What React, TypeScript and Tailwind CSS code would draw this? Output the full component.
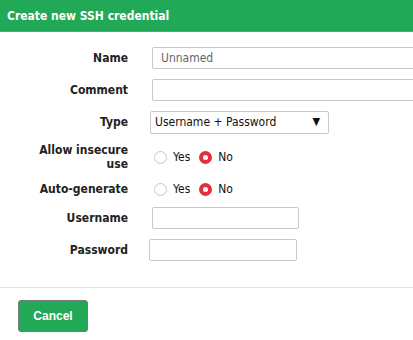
import React from 'react';

const font = { fontFamily: '"DejaVu Sans Condensed", "DejaVu Sans", Tahoma, sans-serif' };

interface RowProps {
  label: React.ReactNode;
  height: string;
  children: React.ReactNode;
}

const Row: React.FC<RowProps> = ({ label, height, children }) => (
  <div className={`flex items-center ${height}`}>
    <div className="w-[128px] shrink-0 text-right text-[12px] font-bold leading-[14px] text-[#222]">{label}</div>
    <div className="flex items-center">{children}</div>
  </div>
);

const Radio: React.FC<{ checked?: boolean; label: string }> = ({ checked, label }) => (
  <label className="mr-[9px] flex items-center text-[12px] text-[#111]">
    {checked ? (
      <span className="mr-[6px] flex h-[13px] w-[13px] items-center justify-center rounded-full bg-[#e0313b]">
        <span className="h-[5px] w-[5px] rounded-full bg-white" />
      </span>
    ) : (
      <span className="mr-[6px] h-[13px] w-[13px] rounded-full border border-[#c8c8c8] bg-white" />
    )}
    {label}
  </label>
);

export default function App() {
  return (
    <div className="h-[340px] w-[413px] overflow-hidden bg-white font-stretch-condensed" style={font}>
      <div className="flex h-[32px] items-center border-b border-[#8a8a8a] bg-[#22a957] pl-[7px] text-[12px] font-bold text-white">
        Create new SSH credential
      </div>
      <div className="pt-[10px]">
        <Row label="Name" height="h-[32px]">
          <input
            className="ml-[24px] h-[22px] w-[280px] rounded-[2px] border border-[#c8c8c8] px-[8px] text-[12px] text-[#666] outline-none"
            defaultValue="Unnamed"
          />
        </Row>
        <Row label="Comment" height="h-[32px]">
          <input className="ml-[24px] h-[22px] w-[280px] rounded-[2px] border border-[#c8c8c8] px-[8px] text-[12px] outline-none" />
        </Row>
        <Row label="Type" height="h-[32px]">
          <div className="ml-[22px] flex h-[23px] w-[179px] items-center justify-between rounded-[2px] border border-[#c8c8c8] pl-[4px] pr-[8px] text-[12px] text-[#111]">
            <span>Username + Password</span>
            <span className="text-[11px]">▼</span>
          </div>
        </Row>
        <Row
          label={
            <>
              Allow insecure
              <br />
              use
            </>
          }
          height="h-[38px]"
        >
          <div className="ml-[26px] flex items-center">
            <Radio label="Yes" />
            <Radio label="No" checked />
          </div>
        </Row>
        <Row label="Auto-generate" height="h-[26px]">
          <div className="ml-[26px] flex items-center">
            <Radio label="Yes" />
            <Radio label="No" checked />
          </div>
        </Row>
        <Row label="Username" height="h-[32px]">
          <input className="ml-[24px] h-[22px] w-[147px] rounded-[2px] border border-[#c8c8c8] px-[6px] text-[12px] outline-none" />
        </Row>
        <Row label="Password" height="h-[32px]">
          <input
            type="password"
            className="ml-[21px] h-[22px] w-[148px] rounded-[2px] border border-[#c8c8c8] px-[6px] text-[12px] outline-none"
          />
        </Row>
      </div>
      <div className="mt-[21px] border-t border-[#e2e2e2] pl-[18px] pt-[12px]">
        <button
          className="h-[32px] w-[70px] rounded-[3px] border border-[#7a7a7a] bg-[#22a957] text-[12px] font-bold text-white"
          style={{ fontFamily: '"Liberation Sans", Arial, sans-serif' }}
        >
          Cancel
        </button>
      </div>
    </div>
  );
}
